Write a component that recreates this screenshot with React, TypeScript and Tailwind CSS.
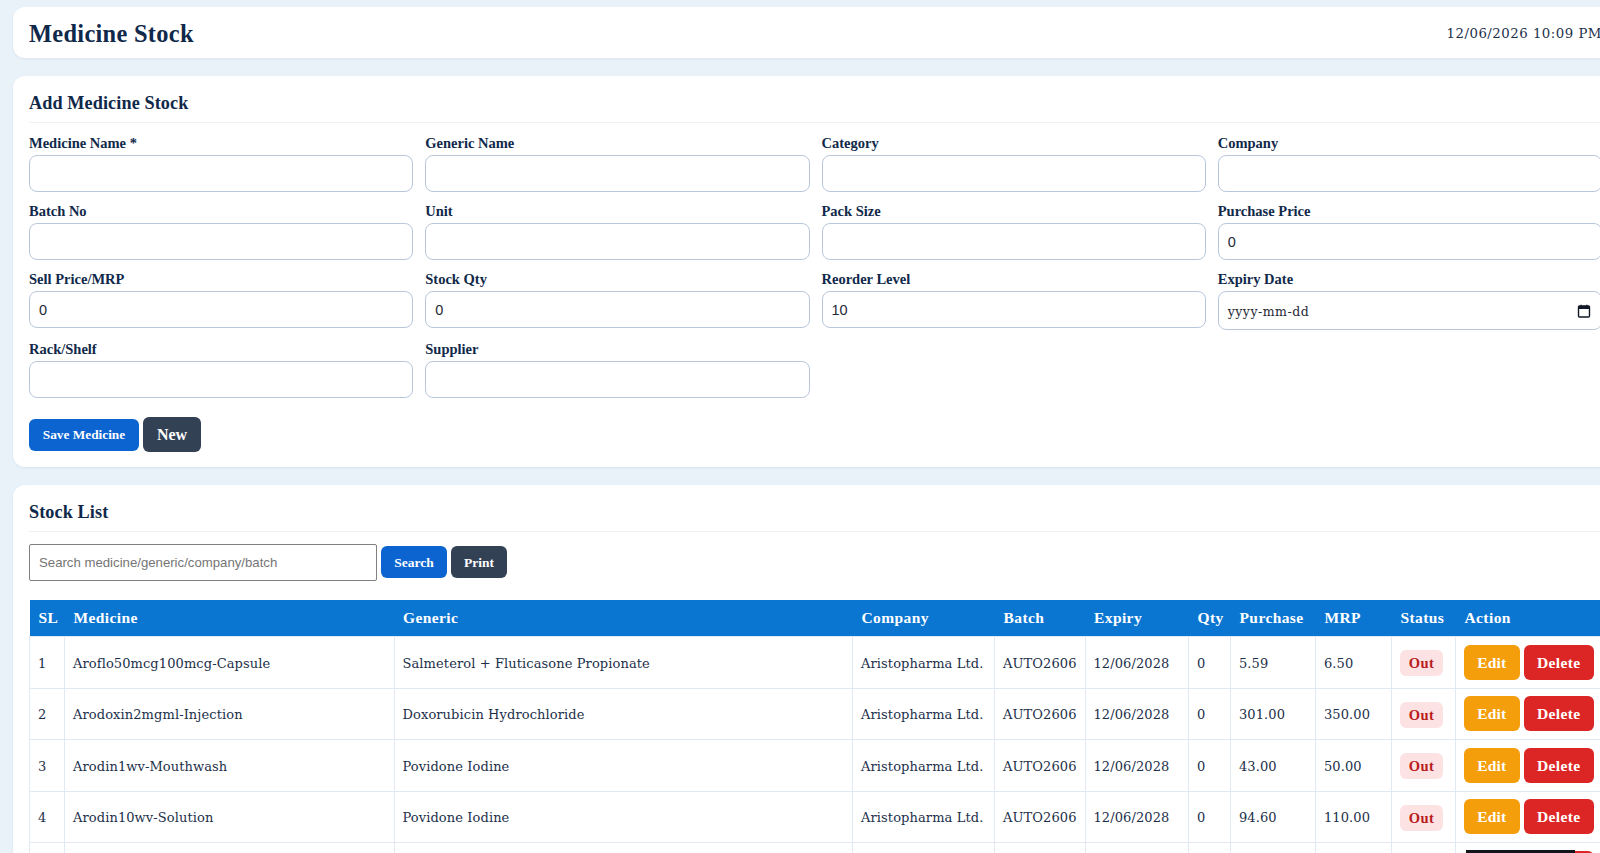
const rows = [
  ["1", "Aroflo50mcg100mcg-Capsule", "Salmeterol + Fluticasone Propionate", "5.59", "6.50"],
  ["2", "Arodoxin2mgml-Injection", "Doxorubicin Hydrochloride", "301.00", "350.00"],
  ["3", "Arodin1wv-Mouthwash", "Povidone Iodine", "43.00", "50.00"],
  ["4", "Arodin10wv-Solution", "Povidone Iodine", "94.60", "110.00"],
  ["", "", "", "", ""],
];

const heads: [string, string][] = [
  ["SL", "w-[35px]"],
  ["Medicine", "w-[329.5px]"],
  ["Generic", "w-[458.5px]"],
  ["Company", "w-[142px]"],
  ["Batch", "w-[90.5px]"],
  ["Expiry", "w-[103.5px]"],
  ["Qty", "w-[42px]"],
  ["Purchase", "w-[85px]"],
  ["MRP", "w-[76px]"],
  ["Status", "w-[64px]"],
  ["Action", "w-[147px]"],
];

function Field({ label, value }: { label: string; value?: string }) {
  return (
    <div className="flex flex-col">
      <label className="mb-[2px] h-[19px] text-[14.5px] font-bold leading-[19px] text-[#10294a]">{label}</label>
      <input
        readOnly
        value={value ?? ""}
        className="h-[37px] w-full rounded-[8px] border border-[#b8c8da] bg-white px-[9px] font-['Liberation_Sans',sans-serif] text-[14.5px] text-[#1f2937] outline-none"
      />
    </div>
  );
}

function Card({ title, pad, children }: { title: string; pad: string; children: React.ReactNode }) {
  return (
    <section className={`rounded-[12px] bg-white px-4 pt-[16px] shadow-[0_1px_3px_rgba(30,70,120,0.08)] ${pad}`}>
      <h2 className="h-[22px] text-[18.2px] font-bold leading-[22px] tracking-[0.1px] text-[#10294a]">{title}</h2>
      <div className="mb-[11px] mt-[8px] h-px bg-[#eef2f6]" />
      {children}
    </section>
  );
}

function Td({ children, extra = "" }: { children: React.ReactNode; extra?: string }) {
  return <td className={`border border-[#e0e9f4] px-[8px] align-middle whitespace-nowrap ${extra}`}>{children}</td>;
}

export default function App() {
  return (
    <div className="h-[853px] w-[1600px] overflow-hidden bg-[#eaf2f9]">
      <div className="flex w-[1631px] flex-col gap-[18px] px-[13px] pt-[7px] font-['Liberation_Serif',serif] text-[#1c2f4a]">
        <header className="flex h-[51px] items-center justify-between rounded-[12px] bg-white px-4 pt-[3px] shadow-[0_1px_3px_rgba(30,70,120,0.08)]">
          <h1 className="text-[24.4px] font-bold tracking-[0.3px] text-[#10294a]">Medicine Stock</h1>
          <div className="font-['DejaVu_Serif',serif] text-[13.3px] tracking-[0.5px] text-[#1c2f4a]">12/06/2026 10:09 PM</div>
        </header>

        <Card title="Add Medicine Stock" pad="pb-[14.5px]">
          <div className="grid grid-cols-4 gap-x-[12px] gap-y-[10px]">
            <Field label="Medicine Name *" />
            <Field label="Generic Name" />
            <Field label="Category" />
            <Field label="Company" />
            <Field label="Batch No" />
            <Field label="Unit" />
            <Field label="Pack Size" />
            <Field label="Purchase Price" value="0" />
            <Field label="Sell Price/MRP" value="0" />
            <Field label="Stock Qty" value="0" />
            <Field label="Reorder Level" value="10" />
            <div className="flex flex-col">
              <label className="mb-[2px] h-[19px] text-[14.5px] font-bold leading-[19px] text-[#10294a]">Expiry Date</label>
              <div className="flex h-[39px] items-center justify-between rounded-[8px] border border-[#b8c8da] bg-white pl-[9px] pr-[10px] font-['DejaVu_Serif',serif] text-[12.5px] tracking-[0.5px] text-[#1f2937]">
                <span className="pt-[3px]">yyyy-mm-dd</span>
                <svg width="14" height="14" viewBox="0 0 14 14" className="text-[#111827]">
                  <rect x="1.5" y="2" width="11" height="11" rx="1.2" fill="none" stroke="currentColor" strokeWidth="1.4" />
                  <rect x="1.5" y="2" width="11" height="3" fill="currentColor" />
                  <rect x="3.5" y="0.8" width="1.4" height="2" fill="currentColor" />
                  <rect x="9.1" y="0.8" width="1.4" height="2" fill="currentColor" />
                </svg>
              </div>
            </div>
            <Field label="Rack/Shelf" />
            <Field label="Supplier" />
          </div>
          <div className="mt-[19px] flex items-center gap-[4px]">
            <button className="h-[32px] w-[110px] rounded-[6px] bg-[#0b64cf] pt-px text-[13.3px] font-bold text-white">Save Medicine</button>
            <button className="h-[35px] w-[58px] rounded-[6px] bg-[#334155] text-[16px] font-bold text-white">New</button>
          </div>
        </Card>

        <Card title="Stock List" pad="pb-4">
          <div className="mb-[19px] mt-[12px] flex items-center gap-[4px]">
            <input
              readOnly
              placeholder="Search medicine/generic/company/batch"
              className="h-[37px] w-[348px] rounded-[2px] border border-[#808080] bg-white px-[9px] font-['Liberation_Sans',sans-serif] text-[13.2px] placeholder:text-[#757575]"
            />
            <button className="h-[32px] w-[66px] rounded-[6px] bg-[#0b64cf] pt-[2px] text-[13.5px] font-bold text-white">Search</button>
            <button className="h-[32px] w-[56px] rounded-[6px] bg-[#334155] pt-[2px] text-[13.5px] font-bold text-white">Print</button>
          </div>
          <table className="w-[1573px] table-fixed border-collapse font-['DejaVu_Serif',serif] text-[13px] tracking-[0.1px] text-[#1c2f4a]">
            <thead>
              <tr className="h-[37px] bg-[#0b76d1] font-['Liberation_Serif',serif] text-white">
                {heads.map(([h, w]) => (
                  <th key={h} className={`${w} px-[9px] text-left text-[15.5px] font-bold tracking-[0.4px]`}>{h}</th>
                ))}
              </tr>
            </thead>
            <tbody>
              {rows.map((r, i) => (
                <tr key={i} className="h-[51.5px]">
                  <Td><span className="relative top-[1px]">{r[0]}</span></Td>
                  <Td><span className="relative top-[1px]">{r[1]}</span></Td>
                  <Td><span className="relative top-[1px]">{r[2]}</span></Td>
                  <Td><span className="relative top-[1px]">{r[0] && "Aristopharma Ltd."}</span></Td>
                  <Td><span className="relative top-[1px]">{r[0] && "AUTO2606"}</span></Td>
                  <Td><span className="relative top-[1px]">{r[0] && "12/06/2028"}</span></Td>
                  <Td><span className="relative top-[1px]">{r[0] && "0"}</span></Td>
                  <Td><span className="relative top-[1px]">{r[3]}</span></Td>
                  <Td><span className="relative top-[1px]">{r[4]}</span></Td>
                  <Td>
                    {r[0] && (
                      <span className="relative top-[1px] inline-block h-[26px] w-[43px] rounded-[6px] bg-[#fde2e4] text-center font-['Liberation_Serif',serif] text-[14.5px] font-bold leading-[26px] tracking-[0.4px] text-[#b91c1c]">Out</span>
                    )}
                  </Td>
                  <Td extra="relative">
                    <div className="flex gap-[4px] font-['Liberation_Serif',serif] tracking-[0.4px]">
                      <button className="h-[35px] w-[56px] rounded-[6px] bg-[#f59e0b] text-[15.5px] font-bold tracking-[0.2px] text-white">Edit</button>
                      <button className="h-[35px] w-[71px] rounded-[6px] bg-[#dc2626] text-[15.5px] font-bold text-white">Delete</button>
                    </div>
                    {!r[0] && <div className="absolute left-[10px] top-[7px] h-[30px] w-[109px] bg-[#14141c]" />}
                  </Td>
                </tr>
              ))}
            </tbody>
          </table>
        </Card>
      </div>
    </div>
  );
}
